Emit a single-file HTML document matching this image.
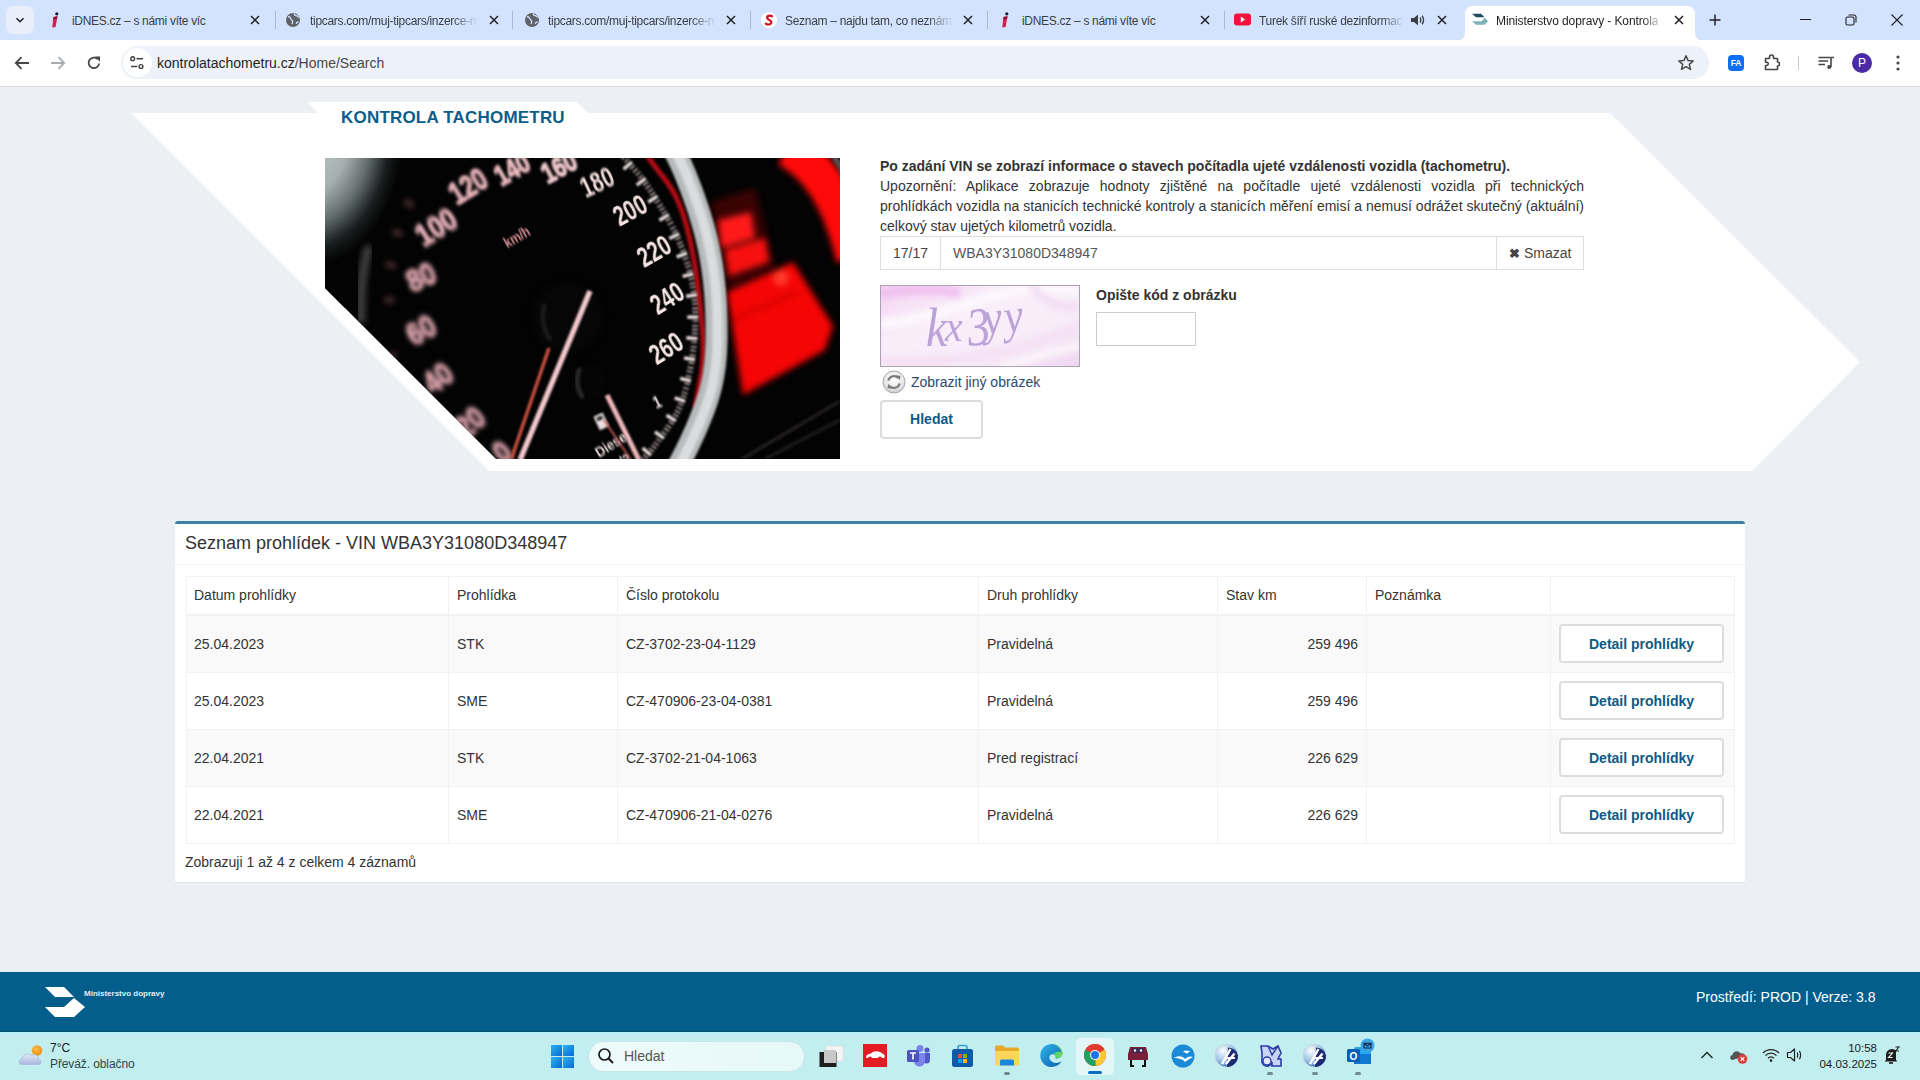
<!DOCTYPE html>
<html><head><meta charset="utf-8">
<style>
*{box-sizing:border-box;margin:0;padding:0}
html,body{width:1920px;height:1080px;overflow:hidden;font-family:"Liberation Sans",sans-serif;background:#eceff4;position:relative}
.abs{position:absolute}
#tabs{left:0;top:0;width:1920px;height:40px;background:#d3e3fd}
#toolbar{left:0;top:40px;width:1920px;height:46px;background:#fff}
#tbline{left:0;top:86px;width:1920px;height:1px;background:#d6d9de}
#page{left:0;top:87px;width:1920px;height:885px;background:#eceff4}
#footer{left:0;top:972px;width:1920px;height:60px;background:#045e8c}
#taskbar{left:0;top:1032px;width:1920px;height:48px;background:#c3eef0}
.tab{position:absolute;top:0;height:40px;font-size:12.5px;color:#1f1f1f}
.tabt{position:absolute;top:14px;white-space:nowrap;overflow:hidden}
.tabx{position:absolute;top:12px;width:16px;height:16px}
.sep{position:absolute;top:12px;width:1px;height:18px;background:#a8b4c8}
</style></head><body>
<div id="tabs" class="abs"></div>
<div id="toolbar" class="abs"></div>
<div id="tbline" class="abs"></div>
<!-- TAB STRIP -->
<div class="abs" style="left:6px;top:6px;width:28px;height:28px;border-radius:8px;background:#e8effb"></div>
<svg class="abs" style="left:14px;top:14px" width="12" height="12" viewBox="0 0 12 12"><path d="M2.5 4.2L6 7.7 9.5 4.2" stroke="#202124" stroke-width="1.6" fill="none"/></svg>
<svg class="abs" style="left:47px;top:12px" width="16" height="16" viewBox="0 0 16 16"><circle cx="9.8" cy="1.8" r="1.6" fill="#1a1a2e"/><path d="M6.5 5L10.5 4.2 8.6 15 5.2 15.6z" fill="#d6204b"/><path d="M6.5 5L10.5 4.2 10 7 6.2 7.6z" fill="#8a1030"/></svg>
<div class="abs tabt" style="left:72px;width:140px;font-size:12px;letter-spacing:-0.3px;color:#3a3e44">iDNES.cz – s námi víte víc</div>
<svg class="abs" style="left:249px;top:14px" width="12" height="12" viewBox="0 0 12 12"><path d="M2 2L10 10M10 2L2 10" stroke="#202124" stroke-width="1.5"/></svg>
<svg class="abs" style="left:285px;top:12px" width="16" height="16" viewBox="0 0 16 16"><circle cx="8" cy="8" r="7" fill="#5f6368"/><path d="M3 4.5c1.5 0 2.5 1 2.8 2.2.3 1.2 1.5 1.3 1.8 2.3.3 1-.5 2-.3 3.2M9.5 1.5c-.3 1.2.5 2 1.6 2.2 1.2.2 2.2.8 2.5 2M13.5 10c-1 0-2 .6-2.3 1.8" stroke="#d3e3fd" stroke-width="1.3" fill="none"/></svg>
<div class="abs tabt" style="left:310px;width:168px;font-size:12px;letter-spacing:-0.3px;color:#3a3e44;-webkit-mask-image:linear-gradient(90deg,#000 85%,transparent)">tipcars.com/muj-tipcars/inzerce-moje-inzeraty</div>
<svg class="abs" style="left:488px;top:14px" width="12" height="12" viewBox="0 0 12 12"><path d="M2 2L10 10M10 2L2 10" stroke="#202124" stroke-width="1.5"/></svg>
<svg class="abs" style="left:524px;top:12px" width="16" height="16" viewBox="0 0 16 16"><circle cx="8" cy="8" r="7" fill="#5f6368"/><path d="M3 4.5c1.5 0 2.5 1 2.8 2.2.3 1.2 1.5 1.3 1.8 2.3.3 1-.5 2-.3 3.2M9.5 1.5c-.3 1.2.5 2 1.6 2.2 1.2.2 2.2.8 2.5 2M13.5 10c-1 0-2 .6-2.3 1.8" stroke="#d3e3fd" stroke-width="1.3" fill="none"/></svg>
<div class="abs tabt" style="left:548px;width:168px;font-size:12px;letter-spacing:-0.3px;color:#3a3e44;-webkit-mask-image:linear-gradient(90deg,#000 85%,transparent)">tipcars.com/muj-tipcars/inzerce-moje-inzeraty</div>
<svg class="abs" style="left:725px;top:14px" width="12" height="12" viewBox="0 0 12 12"><path d="M2 2L10 10M10 2L2 10" stroke="#202124" stroke-width="1.5"/></svg>
<svg class="abs" style="left:761px;top:12px" width="16" height="16" viewBox="0 0 16 16"><circle cx="8" cy="8" r="8" fill="#fff"/><path d="M11 4.2C9 3 5.5 3.8 6.2 6.2 7 8.5 11 8 10.2 10.8 9.5 13 6 12.8 4.8 11.6" stroke="#d0111b" stroke-width="2.2" fill="none" stroke-linecap="round"/></svg>
<div class="abs tabt" style="left:785px;width:168px;font-size:12px;letter-spacing:-0.3px;color:#3a3e44;-webkit-mask-image:linear-gradient(90deg,#000 85%,transparent)">Seznam – najdu tam, co neznám</div>
<svg class="abs" style="left:962px;top:14px" width="12" height="12" viewBox="0 0 12 12"><path d="M2 2L10 10M10 2L2 10" stroke="#202124" stroke-width="1.5"/></svg>
<svg class="abs" style="left:997px;top:12px" width="16" height="16" viewBox="0 0 16 16"><circle cx="9.8" cy="1.8" r="1.6" fill="#1a1a2e"/><path d="M6.5 5L10.5 4.2 8.6 15 5.2 15.6z" fill="#d6204b"/><path d="M6.5 5L10.5 4.2 10 7 6.2 7.6z" fill="#8a1030"/></svg>
<div class="abs tabt" style="left:1022px;width:140px;font-size:12px;letter-spacing:-0.3px;color:#3a3e44">iDNES.cz – s námi víte víc</div>
<svg class="abs" style="left:1199px;top:14px" width="12" height="12" viewBox="0 0 12 12"><path d="M2 2L10 10M10 2L2 10" stroke="#202124" stroke-width="1.5"/></svg>
<svg class="abs" style="left:1234px;top:13px" width="17" height="13" viewBox="0 0 17 13"><rect x="0" y="0.5" width="17" height="12" rx="3" fill="#f0143c"/><path d="M6.8 3.6L11 6.5 6.8 9.4z" fill="#fff"/></svg>
<div class="abs tabt" style="left:1259px;width:145px;font-size:12px;letter-spacing:-0.3px;color:#3a3e44;-webkit-mask-image:linear-gradient(90deg,#000 85%,transparent)">Turek šíří ruské dezinformace</div>
<svg class="abs" style="left:1410px;top:13px" width="15" height="14" viewBox="0 0 15 14"><path d="M1 5h3l4-3.5v11L4 9H1z" fill="#3c4043"/><path d="M10 4.5c1 .8 1 4.2 0 5M12 2.8c2 1.8 2 6.6 0 8.4" stroke="#3c4043" stroke-width="1.4" fill="none"/></svg>
<svg class="abs" style="left:1436px;top:14px" width="12" height="12" viewBox="0 0 12 12"><path d="M2 2L10 10M10 2L2 10" stroke="#202124" stroke-width="1.5"/></svg>
<div class="abs" style="left:275px;top:11px;width:1px;height:18px;background:#a9b9d3"></div>
<div class="abs" style="left:512px;top:11px;width:1px;height:18px;background:#a9b9d3"></div>
<div class="abs" style="left:750px;top:11px;width:1px;height:18px;background:#a9b9d3"></div>
<div class="abs" style="left:987px;top:11px;width:1px;height:18px;background:#a9b9d3"></div>
<div class="abs" style="left:1224px;top:11px;width:1px;height:18px;background:#a9b9d3"></div>

<svg class="abs" style="left:1455px;top:0" width="252" height="41" viewBox="0 0 252 41"><path d="M0 41 Q10 41 10 32 L10 14 Q10 6 18 6 L232 6 Q240 6 240 14 L240 32 Q240 41 250 41 Z" fill="#fff"/></svg>
<svg class="abs" style="left:1472px;top:13px" width="17" height="13" viewBox="0 0 17 13"><path d="M0 0.8H9L12.5 4.2H4Z" fill="#1f4c62"/><path d="M0 8.2H9.5L12.5 5H13L16 8.2 12.8 11.7H4Z" fill="#7fb4bb"/></svg>
<div class="abs tabt" style="left:1496px;width:167px;font-size:12px;letter-spacing:-0.1px;color:#1f1f1f;-webkit-mask-image:linear-gradient(90deg,#000 88%,transparent)">Ministerstvo dopravy - Kontrola tachometru</div>
<svg class="abs" style="left:1673px;top:14px" width="12" height="12" viewBox="0 0 12 12"><path d="M2 2L10 10M10 2L2 10" stroke="#202124" stroke-width="1.5"/></svg>
<svg class="abs" style="left:1708px;top:13px" width="14" height="14" viewBox="0 0 14 14"><path d="M7 1.5V12.5M1.5 7H12.5" stroke="#202124" stroke-width="1.5"/></svg>
<div class="abs" style="left:1800px;top:19px;width:11px;height:1px;background:#202124"></div>
<svg class="abs" style="left:1845px;top:14px" width="12" height="12" viewBox="0 0 12 12"><rect x="1" y="3" width="8" height="8" rx="1.5" fill="none" stroke="#202124" stroke-width="1.1"/><path d="M3.5 1h5.5a2 2 0 0 1 2 2v5.5" fill="none" stroke="#202124" stroke-width="1.1"/></svg>
<svg class="abs" style="left:1890px;top:13px" width="14" height="14" viewBox="0 0 14 14"><path d="M1.5 1.5L12.5 12.5M12.5 1.5L1.5 12.5" stroke="#202124" stroke-width="1.2"/></svg>

<!-- TOOLBAR -->
<svg class="abs" style="left:13px;top:54px" width="18" height="18" viewBox="0 0 18 18"><path d="M16 9H3M8.5 3.2L2.8 9 8.5 14.8" stroke="#474747" stroke-width="1.8" fill="none"/></svg>
<svg class="abs" style="left:49px;top:54px" width="18" height="18" viewBox="0 0 18 18"><path d="M2 9H15M9.5 3.2L15.2 9 9.5 14.8" stroke="#a8abae" stroke-width="1.8" fill="none"/></svg>
<svg class="abs" style="left:85px;top:54px" width="18" height="18" viewBox="0 0 18 18"><path d="M14.2 9.5A5.3 5.3 0 1 1 12.6 5" stroke="#474747" stroke-width="1.8" fill="none"/><path d="M9.8 2.5H15V7.7z" fill="#474747"/></svg>
<div class="abs" style="left:121px;top:46px;width:1588px;height:33px;border-radius:17px;background:#edf2fa"></div>
<div class="abs" style="left:123px;top:48px;width:29px;height:29px;border-radius:50%;background:#fff"></div>
<svg class="abs" style="left:129px;top:55px" width="16" height="16" viewBox="0 0 16 16"><circle cx="3.7" cy="3.7" r="1.9" fill="none" stroke="#3c4043" stroke-width="1.4"/><path d="M7.5 3.7H14" stroke="#3c4043" stroke-width="1.5"/><circle cx="12" cy="11.5" r="1.9" fill="none" stroke="#3c4043" stroke-width="1.4"/><path d="M2 11.5H8.3" stroke="#3c4043" stroke-width="1.5"/></svg>
<div class="abs" style="left:157px;top:55px;font-size:14px;color:#1f1f1f;white-space:nowrap">kontrolatachometru.cz<span style="color:#474747">/Home/Search</span></div>
<svg class="abs" style="left:1677px;top:54px" width="18" height="18" viewBox="0 0 18 18"><path d="M9 1.8L11.1 6.6 16.2 7 12.3 10.4 13.5 15.4 9 12.7 4.5 15.4 5.7 10.4 1.8 7 6.9 6.6Z" fill="none" stroke="#474747" stroke-width="1.5" stroke-linejoin="round"/></svg>
<div class="abs" style="left:1728px;top:55px;width:16px;height:16px;border-radius:4px;background:#0b6ef3;color:#fff;font-size:8.5px;font-weight:bold;line-height:16px;text-align:center;letter-spacing:-0.3px">FA</div>
<svg class="abs" style="left:1763px;top:53px" width="20" height="19" viewBox="0 0 20 19"><path d="M2.5 5.5H6.5V4A2 2 0 0 1 10.5 4V5.5H14.5V9A2 2 0 0 1 14.5 13V16.5H2.5V12.5H4A1.7 1.7 0 0 0 4 9.2H2.5Z" fill="none" stroke="#474747" stroke-width="1.6" stroke-linejoin="round"/></svg>
<div class="abs" style="left:1798px;top:56px;width:1px;height:14px;background:#c7cbd1"></div>
<svg class="abs" style="left:1818px;top:56px" width="18" height="14" viewBox="0 0 18 14"><path d="M0.5 1.5H12M0.5 5H10M0.5 8.5H7" stroke="#474747" stroke-width="1.6"/><path d="M13 11V1.5H16" stroke="#474747" stroke-width="1.6" fill="none"/><circle cx="11.2" cy="11" r="2" fill="#474747"/></svg>
<div class="abs" style="left:1852px;top:53px;width:20px;height:20px;border-radius:50%;background:#4b2aa6;color:#fff;font-size:12px;line-height:20px;text-align:center">P</div>
<svg class="abs" style="left:1895px;top:54px" width="6" height="18" viewBox="0 0 6 18"><circle cx="3" cy="3" r="1.6" fill="#474747"/><circle cx="3" cy="9" r="1.6" fill="#474747"/><circle cx="3" cy="15" r="1.6" fill="#474747"/></svg>

<div id="page" class="abs"></div>

<!-- PAGE -->
<svg class="abs" style="left:0;top:87px" width="1920" height="885" viewBox="0 87 1920 885">
<polygon points="131,113 1610,113 1860,362 1752,471 489,471" fill="#fff"/>
<polygon points="307,102 577,102 588,113 318,113" fill="#fff"/>
</svg>
<div class="abs" style="left:341px;top:108px;font-size:17px;font-weight:bold;color:#0b5d8c;white-space:nowrap;letter-spacing:0.2px">KONTROLA TACHOMETRU</div>
<svg class="abs" style="left:325px;top:158px" width="515" height="301" viewBox="0 0 515 301">
<defs>
<clipPath id="spc"><polygon points="0,0 515,0 515,301 171,301 0,130"/></clipPath>
<radialGradient id="tlg" cx="0" cy="0" r="1" gradientUnits="userSpaceOnUse" gradientTransform="translate(-22 -22) scale(100 132)"><stop offset="0" stop-color="#c4cccc"/><stop offset="0.45" stop-color="#a6b0b0"/><stop offset="0.66" stop-color="#687272"/><stop offset="0.86" stop-color="#1a1e1e"/><stop offset="1" stop-color="#030303"/></radialGradient>
<filter id="bl1" x="-20%" y="-20%" width="140%" height="140%" color-interpolation-filters="sRGB"><feGaussianBlur stdDeviation="0.8"/></filter>
<filter id="bl2" x="-20%" y="-20%" width="140%" height="140%" color-interpolation-filters="sRGB"><feGaussianBlur stdDeviation="1.8"/></filter>
<filter id="bl3" x="-30%" y="-30%" width="160%" height="160%" color-interpolation-filters="sRGB"><feGaussianBlur stdDeviation="3"/></filter>
<filter id="nb7" x="-30%" y="-30%" width="160%" height="160%" color-interpolation-filters="sRGB"><feGaussianBlur stdDeviation="0.7"/></filter><filter id="nb8" x="-30%" y="-30%" width="160%" height="160%" color-interpolation-filters="sRGB"><feGaussianBlur stdDeviation="0.8"/></filter><filter id="nb13" x="-30%" y="-30%" width="160%" height="160%" color-interpolation-filters="sRGB"><feGaussianBlur stdDeviation="1.3"/></filter><filter id="nb15" x="-30%" y="-30%" width="160%" height="160%" color-interpolation-filters="sRGB"><feGaussianBlur stdDeviation="1.5"/></filter><filter id="nb18" x="-30%" y="-30%" width="160%" height="160%" color-interpolation-filters="sRGB"><feGaussianBlur stdDeviation="1.8"/></filter><filter id="nb21" x="-30%" y="-30%" width="160%" height="160%" color-interpolation-filters="sRGB"><feGaussianBlur stdDeviation="2.1"/></filter><filter id="nb23" x="-30%" y="-30%" width="160%" height="160%" color-interpolation-filters="sRGB"><feGaussianBlur stdDeviation="2.3"/></filter><filter id="nb25" x="-30%" y="-30%" width="160%" height="160%" color-interpolation-filters="sRGB"><feGaussianBlur stdDeviation="2.5"/></filter><filter id="nb26" x="-30%" y="-30%" width="160%" height="160%" color-interpolation-filters="sRGB"><feGaussianBlur stdDeviation="2.6"/></filter>
</defs>
<g clip-path="url(#spc)">
<rect width="515" height="301" fill="#030303"/>
<rect width="140" height="150" fill="url(#tlg)"/>
<path d="M44 88 Q34 120 36 165" stroke="#404040" stroke-width="9" fill="none" filter="url(#bl3)"/>
<!-- red arc top-right -->
<path d="M462 -10 Q510 15 530 100" stroke="#ff0a0a" stroke-width="38" fill="none" filter="url(#bl3)"/>
<path d="M503 -10 Q525 18 532 55" stroke="#5a5050" stroke-width="6" fill="none" filter="url(#bl2)"/>
<!-- small lcd panel -->
<polygon points="386,44 430,30 450,110 404,132" fill="#3a0303" filter="url(#bl3)"/>
<g filter="url(#bl3)">
<polygon points="393,62 426,54 430,80 396,90" fill="#ff1a1a"/>
<polygon points="400,92 440,80 444,104 404,118" fill="#f81010"/>
</g>
<!-- big lcd panel -->
<g filter="url(#bl3)">
<polygon points="402,134 468,104 508,168 500,192 418,237" fill="#f50505"/>
<circle cx="456" cy="120" r="8" fill="#ff3a2a"/>
<path d="M408 162 L472 134" stroke="#c80000" stroke-width="3"/>
</g>
<path d="M417 301 L515 243" stroke="#3a3232" stroke-width="2" fill="none" filter="url(#bl2)"/>
<path d="M440 301 L515 262" stroke="#202020" stroke-width="3" fill="none" filter="url(#bl2)"/>
<!-- rim -->
<path d="M300.0 -40.0 L301.2 -38.1 L302.6 -35.6 L304.3 -32.7 L306.1 -29.5 L308.2 -26.0 L310.4 -22.3 L312.6 -18.5 L315.0 -14.6 L317.3 -10.7 L319.6 -7.0 L321.9 -3.4 L324.0 0.0 L326.1 3.2 L328.3 6.2 L330.6 9.3 L332.9 12.3 L335.2 15.2 L337.6 18.2 L339.8 21.2 L342.1 24.2 L344.2 27.3 L346.3 30.4 L348.2 33.6 L350.0 37.0 L351.7 40.4 L353.2 43.8 L354.6 47.2 L356.0 50.7 L357.3 54.2 L358.5 57.8 L359.7 61.5 L360.8 65.3 L361.9 69.2 L362.9 73.3 L364.0 77.6 L365.0 82.0 L366.0 86.7 L367.0 91.7 L368.0 96.9 L369.0 102.3 L369.9 107.8 L370.8 113.4 L371.6 119.1 L372.4 124.7 L373.1 130.3 L373.8 135.7 L374.4 141.0 L375.0 146.0 L375.5 150.9 L376.0 155.6 L376.5 160.3 L376.9 164.9 L377.3 169.4 L377.6 173.9 L377.9 178.3 L378.1 182.7 L378.2 187.0 L378.2 191.3 L378.2 195.7 L378.0 200.0 L377.7 204.5 L377.2 209.1 L376.6 214.0 L375.9 218.8 L375.0 223.6 L374.2 228.4 L373.3 232.9 L372.5 237.2 L371.7 241.1 L371.0 244.6 L370.4 247.6 L370.0 250.0" fill="none" stroke="#b80c14" stroke-width="5" filter="url(#bl2)"/>
<path d="M318.0 -50.0 L319.7 -47.7 L321.9 -44.9 L324.4 -41.7 L327.3 -38.2 L330.4 -34.3 L333.7 -30.1 L337.1 -25.6 L340.5 -20.8 L343.9 -15.9 L347.1 -10.7 L350.2 -5.4 L353.0 0.0 L355.7 5.7 L358.4 11.8 L361.1 18.2 L363.7 24.9 L366.4 31.8 L368.9 38.8 L371.4 46.0 L373.8 53.1 L376.0 60.3 L378.1 67.4 L380.0 74.3 L381.7 81.0 L383.2 87.6 L384.6 94.1 L385.8 100.7 L386.9 107.2 L387.8 113.7 L388.6 120.1 L389.3 126.5 L389.9 132.9 L390.4 139.3 L390.8 145.6 L391.1 151.8 L391.3 158.0 L391.5 164.1 L391.5 170.2 L391.6 176.2 L391.5 182.1 L391.3 188.0 L391.0 193.9 L390.6 199.7 L390.1 205.6 L389.3 211.4 L388.4 217.2 L387.3 223.1 L386.0 229.0 L384.4 235.0 L382.6 241.1 L380.5 247.4 L378.2 253.6 L375.7 259.9 L373.2 266.1 L370.5 272.3 L367.8 278.3 L365.1 284.1 L362.4 289.7 L359.8 295.0 L357.3 300.0 L354.8 304.8 L352.1 309.5 L349.3 314.1 L346.5 318.6 L343.7 322.9 L340.9 326.9 L338.2 330.8 L335.6 334.3 L333.3 337.5 L331.2 340.4 L329.4 342.9 L328.0 345.0" fill="none" stroke="#b6baba" stroke-width="22" filter="url(#bl1)"/>
<path d="M319.0 -50.0 L320.7 -47.7 L322.9 -44.9 L325.4 -41.7 L328.3 -38.2 L331.4 -34.3 L334.7 -30.1 L338.1 -25.6 L341.5 -20.8 L344.9 -15.9 L348.1 -10.7 L351.2 -5.4 L354.0 0.0 L356.7 5.7 L359.4 11.8 L362.1 18.2 L364.7 24.9 L367.4 31.8 L369.9 38.8 L372.4 46.0 L374.8 53.1 L377.0 60.3 L379.1 67.4 L381.0 74.3 L382.7 81.0 L384.2 87.6 L385.6 94.1 L386.8 100.7 L387.9 107.2 L388.8 113.7 L389.6 120.1 L390.3 126.5 L390.9 132.9 L391.4 139.3 L391.8 145.6 L392.1 151.8 L392.3 158.0 L392.5 164.1 L392.5 170.2 L392.6 176.2 L392.5 182.1 L392.3 188.0 L392.0 193.9 L391.6 199.7 L391.1 205.6 L390.3 211.4 L389.4 217.2 L388.3 223.1 L387.0 229.0 L385.4 235.0 L383.6 241.1 L381.5 247.4 L379.2 253.6 L376.7 259.9 L374.2 266.1 L371.5 272.3 L368.8 278.3 L366.1 284.1 L363.4 289.7 L360.8 295.0 L358.3 300.0 L355.8 304.8 L353.1 309.5 L350.3 314.1 L347.5 318.6 L344.7 322.9 L341.9 326.9 L339.2 330.8 L336.6 334.3 L334.3 337.5 L332.2 340.4 L330.4 342.9 L329.0 345.0" fill="none" stroke="#dadddd" stroke-width="10" filter="url(#bl2)"/>
<!-- ticks -->
<g filter="url(#bl1)"><line x1="295.2" y1="-8.7" x2="290.9" y2="-4.5" stroke="#d8c6c6" stroke-width="1.4"/><line x1="298.2" y1="-5.7" x2="293.9" y2="-1.5" stroke="#d8c6c6" stroke-width="1.4"/><line x1="301.0" y1="-2.7" x2="296.6" y2="1.4" stroke="#d8c6c6" stroke-width="1.4"/><line x1="304.0" y1="0.5" x2="299.5" y2="4.5" stroke="#d8c6c6" stroke-width="1.4"/><line x1="307.0" y1="4.0" x2="298.6" y2="11.1" stroke="#f2e4e4" stroke-width="3.4"/><line x1="309.7" y1="7.2" x2="305.2" y2="11.1" stroke="#d8c6c6" stroke-width="1.4"/><line x1="312.6" y1="10.5" x2="308.1" y2="14.4" stroke="#d8c6c6" stroke-width="1.4"/><line x1="315.3" y1="13.7" x2="310.7" y2="17.5" stroke="#d8c6c6" stroke-width="1.4"/><line x1="318.0" y1="17.0" x2="313.3" y2="20.8" stroke="#d8c6c6" stroke-width="1.4"/><line x1="320.6" y1="20.3" x2="311.8" y2="27.0" stroke="#f2e4e4" stroke-width="3.4"/><line x1="323.2" y1="23.9" x2="318.3" y2="27.4" stroke="#d8c6c6" stroke-width="1.4"/><line x1="325.5" y1="27.3" x2="320.6" y2="30.7" stroke="#d8c6c6" stroke-width="1.4"/><line x1="328.0" y1="31.0" x2="323.0" y2="34.2" stroke="#d8c6c6" stroke-width="1.4"/><line x1="330.2" y1="34.4" x2="325.1" y2="37.6" stroke="#d8c6c6" stroke-width="1.4"/><line x1="332.5" y1="38.1" x2="323.3" y2="44.0" stroke="#f2e4e4" stroke-width="3.4"/><line x1="335.0" y1="42.0" x2="329.9" y2="45.2" stroke="#d8c6c6" stroke-width="1.4"/><line x1="337.6" y1="46.1" x2="332.5" y2="49.3" stroke="#d8c6c6" stroke-width="1.4"/><line x1="339.7" y1="49.5" x2="334.6" y2="52.7" stroke="#d8c6c6" stroke-width="1.4"/><line x1="341.8" y1="53.0" x2="336.7" y2="56.1" stroke="#d8c6c6" stroke-width="1.4"/><line x1="343.9" y1="56.6" x2="334.4" y2="62.2" stroke="#f2e4e4" stroke-width="3.4"/><line x1="346.0" y1="60.2" x2="340.8" y2="63.2" stroke="#d8c6c6" stroke-width="1.4"/><line x1="348.1" y1="63.9" x2="342.8" y2="66.8" stroke="#d8c6c6" stroke-width="1.4"/><line x1="350.5" y1="68.5" x2="345.2" y2="71.3" stroke="#d8c6c6" stroke-width="1.4"/><line x1="352.4" y1="72.1" x2="347.1" y2="74.8" stroke="#d8c6c6" stroke-width="1.4"/><line x1="354.2" y1="75.8" x2="344.3" y2="80.5" stroke="#f2e4e4" stroke-width="3.4"/><line x1="355.9" y1="79.4" x2="350.4" y2="81.8" stroke="#d8c6c6" stroke-width="1.4"/><line x1="357.7" y1="83.8" x2="352.2" y2="86.0" stroke="#d8c6c6" stroke-width="1.4"/><line x1="359.1" y1="87.3" x2="353.6" y2="89.5" stroke="#d8c6c6" stroke-width="1.4"/><line x1="360.8" y1="91.7" x2="355.2" y2="93.8" stroke="#d8c6c6" stroke-width="1.4"/><line x1="362.1" y1="95.2" x2="351.7" y2="98.9" stroke="#f2e4e4" stroke-width="3.4"/><line x1="363.6" y1="99.6" x2="357.9" y2="101.5" stroke="#d8c6c6" stroke-width="1.4"/><line x1="365.1" y1="104.1" x2="359.3" y2="105.9" stroke="#d8c6c6" stroke-width="1.4"/><line x1="366.1" y1="107.7" x2="360.4" y2="109.3" stroke="#d8c6c6" stroke-width="1.4"/><line x1="367.4" y1="112.2" x2="361.6" y2="113.7" stroke="#d8c6c6" stroke-width="1.4"/><line x1="368.3" y1="115.8" x2="357.6" y2="118.4" stroke="#f2e4e4" stroke-width="3.4"/><line x1="369.3" y1="120.3" x2="363.5" y2="121.6" stroke="#d8c6c6" stroke-width="1.4"/><line x1="370.2" y1="124.9" x2="364.4" y2="126.0" stroke="#d8c6c6" stroke-width="1.4"/><line x1="370.9" y1="128.6" x2="365.0" y2="129.6" stroke="#d8c6c6" stroke-width="1.4"/><line x1="371.6" y1="133.2" x2="365.7" y2="134.1" stroke="#d8c6c6" stroke-width="1.4"/><line x1="372.1" y1="136.9" x2="361.2" y2="138.3" stroke="#f2e4e4" stroke-width="3.4"/><line x1="372.6" y1="141.7" x2="366.6" y2="142.2" stroke="#d8c6c6" stroke-width="1.4"/><line x1="372.9" y1="145.5" x2="366.9" y2="145.9" stroke="#d8c6c6" stroke-width="1.4"/><line x1="373.2" y1="150.3" x2="367.2" y2="150.5" stroke="#d8c6c6" stroke-width="1.4"/><line x1="373.3" y1="154.2" x2="367.3" y2="154.3" stroke="#d8c6c6" stroke-width="1.4"/><line x1="373.3" y1="159.1" x2="362.3" y2="159.1" stroke="#f2e4e4" stroke-width="3.4"/><line x1="373.3" y1="163.0" x2="367.3" y2="162.9" stroke="#d8c6c6" stroke-width="1.4"/><line x1="373.2" y1="167.9" x2="367.2" y2="167.7" stroke="#d8c6c6" stroke-width="1.4"/><line x1="373.0" y1="171.8" x2="367.0" y2="171.5" stroke="#d8c6c6" stroke-width="1.4"/><line x1="372.8" y1="175.7" x2="366.8" y2="175.3" stroke="#d8c6c6" stroke-width="1.4"/><line x1="372.4" y1="180.6" x2="361.4" y2="179.7" stroke="#f2e4e4" stroke-width="3.4"/><line x1="372.0" y1="184.5" x2="366.1" y2="183.9" stroke="#d8c6c6" stroke-width="1.4"/><line x1="371.6" y1="189.3" x2="365.6" y2="188.6" stroke="#d8c6c6" stroke-width="1.4"/><line x1="371.1" y1="193.1" x2="365.2" y2="192.3" stroke="#d8c6c6" stroke-width="1.4"/><line x1="370.5" y1="197.8" x2="364.6" y2="197.0" stroke="#d8c6c6" stroke-width="1.4"/><line x1="370.0" y1="201.6" x2="359.1" y2="200.0" stroke="#f2e4e4" stroke-width="3.4"/><line x1="369.3" y1="205.5" x2="363.4" y2="204.5" stroke="#d8c6c6" stroke-width="1.4"/><line x1="368.5" y1="210.3" x2="362.6" y2="209.2" stroke="#d8c6c6" stroke-width="1.4"/><line x1="367.8" y1="214.1" x2="361.9" y2="213.0" stroke="#d8c6c6" stroke-width="1.4"/><line x1="366.8" y1="218.9" x2="360.9" y2="217.7" stroke="#d8c6c6" stroke-width="1.4"/><line x1="365.9" y1="222.8" x2="355.2" y2="220.3" stroke="#f2e4e4" stroke-width="3.4"/><line x1="365.0" y1="226.5" x2="359.2" y2="225.1" stroke="#d8c6c6" stroke-width="1.4"/><line x1="363.8" y1="231.1" x2="358.0" y2="229.6" stroke="#d8c6c6" stroke-width="1.4"/><line x1="362.6" y1="235.6" x2="356.8" y2="233.9" stroke="#d8c6c6" stroke-width="1.4"/><line x1="361.5" y1="239.1" x2="355.8" y2="237.3" stroke="#d8c6c6" stroke-width="1.4"/><line x1="360.1" y1="243.4" x2="349.7" y2="239.8" stroke="#f2e4e4" stroke-width="3.4"/><line x1="358.6" y1="247.4" x2="353.0" y2="245.3" stroke="#d8c6c6" stroke-width="1.4"/><line x1="357.0" y1="251.3" x2="351.5" y2="248.9" stroke="#d8c6c6" stroke-width="1.4"/><line x1="355.3" y1="255.1" x2="349.9" y2="252.4" stroke="#d8c6c6" stroke-width="1.4"/><line x1="353.4" y1="258.7" x2="348.1" y2="255.8" stroke="#d8c6c6" stroke-width="1.4"/><line x1="350.9" y1="262.9" x2="341.5" y2="257.3" stroke="#f2e4e4" stroke-width="3.4"/><line x1="348.8" y1="266.3" x2="343.8" y2="263.1" stroke="#d8c6c6" stroke-width="1.4"/><line x1="346.2" y1="270.2" x2="341.2" y2="266.9" stroke="#d8c6c6" stroke-width="1.4"/><line x1="344.0" y1="273.4" x2="339.1" y2="269.9" stroke="#d8c6c6" stroke-width="1.4"/><line x1="341.4" y1="277.0" x2="336.6" y2="273.4" stroke="#d8c6c6" stroke-width="1.4"/><line x1="338.9" y1="280.3" x2="330.0" y2="273.8" stroke="#f2e4e4" stroke-width="3.4"/><line x1="336.1" y1="284.0" x2="331.3" y2="280.5" stroke="#d8c6c6" stroke-width="1.4"/><line x1="333.7" y1="287.5" x2="328.8" y2="284.0" stroke="#d8c6c6" stroke-width="1.4"/><line x1="331.3" y1="290.6" x2="326.6" y2="287.0" stroke="#d8c6c6" stroke-width="1.4"/><line x1="328.7" y1="293.9" x2="324.1" y2="290.1" stroke="#d8c6c6" stroke-width="1.4"/><line x1="326.0" y1="297.2" x2="317.6" y2="290.0" stroke="#f2e4e4" stroke-width="3.4"/><line x1="322.9" y1="300.7" x2="318.4" y2="296.6" stroke="#d8c6c6" stroke-width="1.4"/><line x1="320.0" y1="303.7" x2="315.6" y2="299.6" stroke="#d8c6c6" stroke-width="1.4"/></g>
<!-- numbers --><g filter="url(#bl3)" stroke="#8a5058" stroke-width="3.5"><line x1="80" y1="43" x2="88" y2="48"/><line x1="68" y1="73" x2="77" y2="77"/><line x1="61" y1="106" x2="70" y2="108"/><line x1="60" y1="142" x2="69" y2="142"/><line x1="62" y1="198" x2="71" y2="197"/><line x1="70" y1="248" x2="79" y2="245"/></g>
<text x="0" y="0" transform="translate(234 9) rotate(-28) scale(0.72 1)" font-family="Liberation Sans" font-weight="bold" font-size="30" fill="#f0c8cc" stroke="#f0c8cc" stroke-width="1.6" text-anchor="middle" dominant-baseline="central" filter="url(#nb13)">160</text><text x="0" y="0" transform="translate(187 11) rotate(-30) scale(0.72 1)" font-family="Liberation Sans" font-weight="bold" font-size="30" fill="#ecbcc2" stroke="#ecbcc2" stroke-width="1.6" text-anchor="middle" dominant-baseline="central" filter="url(#nb15)">140</text><text x="0" y="0" transform="translate(143 28) rotate(-32) scale(0.75 1)" font-family="Liberation Sans" font-weight="bold" font-size="31" fill="#e8b4ba" stroke="#e8b4ba" stroke-width="1.6" text-anchor="middle" dominant-baseline="central" filter="url(#nb18)">120</text><text x="0" y="0" transform="translate(111 69) rotate(-32) scale(0.8 1)" font-family="Liberation Sans" font-weight="bold" font-size="32" fill="#e6b0b8" stroke="#e6b0b8" stroke-width="1.6" text-anchor="middle" dominant-baseline="central" filter="url(#nb21)">100</text><text x="0" y="0" transform="translate(96 119) rotate(-25) scale(0.82 1)" font-family="Liberation Sans" font-weight="bold" font-size="32" fill="#e2a8b2" stroke="#e2a8b2" stroke-width="1.6" text-anchor="middle" dominant-baseline="central" filter="url(#nb23)">80</text><text x="0" y="0" transform="translate(96 172) rotate(-30) scale(0.82 1)" font-family="Liberation Sans" font-weight="bold" font-size="32" fill="#e2a8b2" stroke="#e2a8b2" stroke-width="1.6" text-anchor="middle" dominant-baseline="central" filter="url(#nb25)">60</text><text x="0" y="0" transform="translate(113 220) rotate(-38) scale(0.8 1)" font-family="Liberation Sans" font-weight="bold" font-size="32" fill="#e2a8b2" stroke="#e2a8b2" stroke-width="1.6" text-anchor="middle" dominant-baseline="central" filter="url(#nb26)">40</text><text x="0" y="0" transform="translate(145 264) rotate(-40) scale(0.8 1)" font-family="Liberation Sans" font-weight="bold" font-size="32" fill="#e2a8b2" stroke="#e2a8b2" stroke-width="1.6" text-anchor="middle" dominant-baseline="central" filter="url(#nb26)">20</text><text x="0" y="0" transform="translate(177 294) rotate(-40) scale(0.8 1)" font-family="Liberation Sans" font-weight="bold" font-size="32" fill="#e2a8b2" stroke="#e2a8b2" stroke-width="1.6" text-anchor="middle" dominant-baseline="central" filter="url(#nb26)">0</text><text x="0" y="0" transform="translate(272 24) rotate(-25) scale(0.7 1)" font-family="Liberation Sans" font-weight="bold" font-size="29" fill="#f2dcdc" text-anchor="middle" dominant-baseline="central" filter="url(#nb8)">180</text><text x="0" y="0" transform="translate(305 52) rotate(-28) scale(0.7 1)" font-family="Liberation Sans" font-weight="bold" font-size="29" fill="#f4e0e0" text-anchor="middle" dominant-baseline="central" filter="url(#nb7)">200</text><text x="0" y="0" transform="translate(329 93) rotate(-30) scale(0.7 1)" font-family="Liberation Sans" font-weight="bold" font-size="29" fill="#f6e6e6" text-anchor="middle" dominant-baseline="central" filter="url(#nb7)">220</text><text x="0" y="0" transform="translate(342 140) rotate(-32) scale(0.7 1)" font-family="Liberation Sans" font-weight="bold" font-size="29" fill="#f6e6e6" text-anchor="middle" dominant-baseline="central" filter="url(#nb7)">240</text><text x="0" y="0" transform="translate(341 190) rotate(-32) scale(0.7 1)" font-family="Liberation Sans" font-weight="bold" font-size="29" fill="#f6e6e6" text-anchor="middle" dominant-baseline="central" filter="url(#nb7)">260</text>
<text transform="translate(192 79) rotate(-30) scale(0.85 1)" font-family="Liberation Sans" font-size="14" font-weight="bold" fill="#d89098" text-anchor="middle" dominant-baseline="central" filter="url(#bl1)">km/h</text>
<!-- hub -->
<circle cx="242" cy="160" r="36" fill="#060606" filter="url(#bl3)"/>
<path d="M220 146 Q213 165 226 182" stroke="#1e1e1e" stroke-width="4" fill="none" filter="url(#bl2)"/>
<circle cx="264" cy="224" r="18" fill="#050505" filter="url(#bl2)"/>
<path d="M255 210 Q248 225 258 240" stroke="#2e2e2e" stroke-width="4" fill="none" filter="url(#bl2)"/>
<!-- fuel gauge bits -->
<text transform="translate(290 290) rotate(-32) scale(0.85 1)" font-family="Liberation Sans" font-size="15" font-weight="bold" fill="#e8dada" text-anchor="middle" filter="url(#bl1)">Diesel</text>
<text transform="translate(300 308) rotate(-32) scale(0.85 1)" font-family="Liberation Sans" font-size="15" font-weight="bold" fill="#e8dada" text-anchor="middle" filter="url(#bl1)">1/2</text>
<rect x="271" y="256" width="10" height="15" transform="rotate(-25 276 263)" fill="#eadede" filter="url(#bl1)"/>
<rect x="273" y="258" width="6" height="4" transform="rotate(-25 276 263)" fill="#333" filter="url(#bl1)"/>
<text transform="translate(332 244) rotate(-25) scale(0.8 1)" font-family="Liberation Sans" font-size="17" font-weight="bold" fill="#f2e6e6" text-anchor="middle" dominant-baseline="central" filter="url(#bl1)">1</text>
<!-- needles -->
<line x1="224" y1="190" x2="186" y2="302" stroke="#c85040" stroke-width="3.5" filter="url(#bl1)"/>
<line x1="265" y1="133" x2="195" y2="302" stroke="#f3c8cc" stroke-width="5.5" filter="url(#bl1)"/>
<line x1="282" y1="237" x2="314" y2="302" stroke="#f0b8bc" stroke-width="5" filter="url(#bl1)"/>
<line x1="279" y1="262" x2="306" y2="302" stroke="#c05858" stroke-width="2" filter="url(#bl1)"/>
</g>
</svg>
<div class="abs" style="left:880px;top:156px;width:704px;font-size:14px;line-height:20px;color:#333;text-align:justify">
<b>Po zadání VIN se zobrazí informace o stavech počítadla ujeté vzdálenosti vozidla (tachometru).</b><br>Upozornění: Aplikace zobrazuje hodnoty zjištěné na počítadle ujeté vzdálenosti vozidla při technických prohlídkách vozidla na stanicích technické kontroly a stanicích měření emisí a nemusí odrážet skutečný (aktuální) celkový stav ujetých kilometrů vozidla.</div>
<div class="abs" style="left:880px;top:236px;width:704px;height:34px;border:1px solid #ddd;background:#fff"></div>
<div class="abs" style="left:940px;top:236px;width:1px;height:34px;background:#ddd"></div>
<div class="abs" style="left:1496px;top:236px;width:1px;height:34px;background:#ddd"></div>
<div class="abs" style="left:893px;top:245px;font-size:14px;color:#444">17/17</div>
<div class="abs" style="left:953px;top:245px;font-size:14px;color:#555">WBA3Y31080D348947</div>
<div class="abs" style="left:1509px;top:245px;font-size:14px;color:#444"><span style="font-weight:bold;font-size:13px">&#10006;</span> Smazat</div>
<svg class="abs" style="left:880px;top:285px" width="200" height="82" viewBox="0 0 200 82">
<defs>
<linearGradient id="cg0" x1="0" y1="0" x2="1" y2="1"><stop offset="0" stop-color="#f3d2f1"/><stop offset=".35" stop-color="#f9eefa"/><stop offset=".7" stop-color="#f7ecf8"/><stop offset="1" stop-color="#efd6f0"/></linearGradient>
<filter id="cbl" color-interpolation-filters="sRGB"><feGaussianBlur stdDeviation="3"/></filter>
<filter id="cbl1" color-interpolation-filters="sRGB"><feGaussianBlur stdDeviation="0.5"/></filter>
</defs>
<rect width="200" height="82" fill="url(#cg0)"/>
<g filter="url(#cbl)">
<path d="M0 10 Q40 0 80 8" stroke="#efbdee" stroke-width="9" fill="none"/>
<path d="M0 40 Q60 30 110 12 Q150 0 200 5" stroke="#fdf8fd" stroke-width="10" fill="none"/>
<path d="M0 75 Q80 80 140 62 Q180 50 200 40" stroke="#f4dff4" stroke-width="9" fill="none"/>
<path d="M120 82 Q160 70 200 60" stroke="#fbf4fb" stroke-width="8" fill="none"/>
<path d="M150 0 Q180 30 200 20" stroke="#f2dcf3" stroke-width="8" fill="none"/>
</g>
<g fill="#bba3d9" filter="url(#cbl1)" font-family="Liberation Serif" font-style="italic">
<text x="0" y="0" font-size="56" transform="translate(46 61) scale(0.85 1)">k</text>
<text x="0" y="0" font-size="44" transform="translate(65 56) scale(0.9 1)">x</text>
<text x="0" y="0" font-size="54" transform="translate(89 61) rotate(-6) scale(0.85 1)">3</text>
<text x="0" y="0" font-size="48" transform="translate(105 50) rotate(-8) scale(0.9 1)">y</text>
<text x="0" y="0" font-size="48" transform="translate(126 48) rotate(-8) scale(0.9 1)">y</text>
</g>
<rect x="0.5" y="0.5" width="199" height="81" fill="none" stroke="#aaa2b4"/>
</svg>
<div class="abs" style="left:1096px;top:287px;font-size:14px;font-weight:bold;color:#333">Opište kód z obrázku</div>
<div class="abs" style="left:1096px;top:312px;width:100px;height:34px;border:1px solid #ccc;background:#fff"></div>
<svg class="abs" style="left:882px;top:370px" width="24" height="24" viewBox="0 0 24 24">
<defs><radialGradient id="rfg" cx=".5" cy=".35" r=".65"><stop offset="0" stop-color="#ffffff"/><stop offset=".7" stop-color="#e6e6e6"/><stop offset="1" stop-color="#c8c8c8"/></radialGradient></defs>
<circle cx="12" cy="12" r="11" fill="url(#rfg)" stroke="#a9a9a9" stroke-width="1"/>
<path d="M6.3 10.5A6 6 0 0 1 16.5 8" stroke="#7a7a7a" stroke-width="2.2" fill="none"/>
<path d="M14 5.5L18.5 5.8 17.8 10.2Z" fill="#7a7a7a"/>
<path d="M17.7 13.5A6 6 0 0 1 7.5 16" stroke="#7a7a7a" stroke-width="2.2" fill="none"/>
<path d="M10 18.5L5.5 18.2 6.2 13.8Z" fill="#7a7a7a"/>
</svg>
<div class="abs" style="left:911px;top:374px;font-size:14px;color:#2b4a6b">Zobrazit jiný obrázek</div>
<div class="abs" style="left:880px;top:400px;width:103px;height:39px;border:2px solid #ddd;border-radius:4px;background:#fff;font-size:14px;font-weight:bold;color:#0d5a85;text-align:center;line-height:35px">Hledat</div>

<!-- results panel -->
<div class="abs" style="left:175px;top:521px;width:1570px;height:361px;background:#fff;border-top:3px solid #3d80a6;border-radius:3px 3px 0 0;box-shadow:0 1px 1px rgba(0,0,0,.05)"></div>
<div class="abs" style="left:185px;top:533px;font-size:18px;color:#333;white-space:nowrap">Seznam prohlídek - VIN WBA3Y31080D348947</div>
<div class="abs" style="left:175px;top:564px;width:1570px;height:1px;background:#f4f4f4"></div>
<div class="abs" style="left:186px;top:614px;width:1548px;height:58px;background:#f9f9f9"></div>
<div class="abs" style="left:186px;top:672px;width:1548px;height:57px;background:#fff"></div>
<div class="abs" style="left:186px;top:729px;width:1548px;height:57px;background:#f9f9f9"></div>
<div class="abs" style="left:186px;top:786px;width:1548px;height:57px;background:#fff"></div>
<div class="abs" style="left:186px;top:576px;width:1549px;height:1px;background:#f2f2f2"></div>
<div class="abs" style="left:186px;top:614px;width:1549px;height:2px;background:#f2f2f2"></div>
<div class="abs" style="left:186px;top:672px;width:1549px;height:1px;background:#f2f2f2"></div>
<div class="abs" style="left:186px;top:729px;width:1549px;height:1px;background:#f2f2f2"></div>
<div class="abs" style="left:186px;top:786px;width:1549px;height:1px;background:#f2f2f2"></div>
<div class="abs" style="left:186px;top:843px;width:1549px;height:1px;background:#f2f2f2"></div>
<div class="abs" style="left:186px;top:576px;width:1px;height:267px;background:#f2f2f2"></div>
<div class="abs" style="left:448px;top:576px;width:1px;height:267px;background:#f2f2f2"></div>
<div class="abs" style="left:617px;top:576px;width:1px;height:267px;background:#f2f2f2"></div>
<div class="abs" style="left:978px;top:576px;width:1px;height:267px;background:#f2f2f2"></div>
<div class="abs" style="left:1217px;top:576px;width:1px;height:267px;background:#f2f2f2"></div>
<div class="abs" style="left:1366px;top:576px;width:1px;height:267px;background:#f2f2f2"></div>
<div class="abs" style="left:1550px;top:576px;width:1px;height:267px;background:#f2f2f2"></div>
<div class="abs" style="left:1734px;top:576px;width:1px;height:267px;background:#f2f2f2"></div>
<div class="abs" style="left:194px;top:587px;font-size:14px;color:#333;white-space:nowrap">Datum prohlídky</div>
<div class="abs" style="left:457px;top:587px;font-size:14px;color:#333;white-space:nowrap">Prohlídka</div>
<div class="abs" style="left:626px;top:587px;font-size:14px;color:#333;white-space:nowrap">Číslo protokolu</div>
<div class="abs" style="left:987px;top:587px;font-size:14px;color:#333;white-space:nowrap">Druh prohlídky</div>
<div class="abs" style="left:1226px;top:587px;font-size:14px;color:#333;white-space:nowrap">Stav km</div>
<div class="abs" style="left:1375px;top:587px;font-size:14px;color:#333;white-space:nowrap">Poznámka</div>
<div class="abs" style="left:194px;top:636px;font-size:14px;color:#333;white-space:nowrap">25.04.2023</div>
<div class="abs" style="left:457px;top:636px;font-size:14px;color:#333;white-space:nowrap">STK</div>
<div class="abs" style="left:626px;top:636px;font-size:14px;color:#333;white-space:nowrap">CZ-3702-23-04-1129</div>
<div class="abs" style="left:987px;top:636px;font-size:14px;color:#333;white-space:nowrap">Pravidelná</div>
<div class="abs" style="left:1217px;width:141px;top:636px;font-size:14px;color:#333;text-align:right;white-space:nowrap">259 496</div>
<div class="abs" style="left:1559px;top:624px;width:165px;height:39px;border:2px solid #ddd;border-radius:4px;background:#fff;font-size:14px;font-weight:bold;color:#0d5a85;text-align:center;line-height:37px">Detail prohlídky</div>
<div class="abs" style="left:194px;top:693px;font-size:14px;color:#333;white-space:nowrap">25.04.2023</div>
<div class="abs" style="left:457px;top:693px;font-size:14px;color:#333;white-space:nowrap">SME</div>
<div class="abs" style="left:626px;top:693px;font-size:14px;color:#333;white-space:nowrap">CZ-470906-23-04-0381</div>
<div class="abs" style="left:987px;top:693px;font-size:14px;color:#333;white-space:nowrap">Pravidelná</div>
<div class="abs" style="left:1217px;width:141px;top:693px;font-size:14px;color:#333;text-align:right;white-space:nowrap">259 496</div>
<div class="abs" style="left:1559px;top:681px;width:165px;height:39px;border:2px solid #ddd;border-radius:4px;background:#fff;font-size:14px;font-weight:bold;color:#0d5a85;text-align:center;line-height:37px">Detail prohlídky</div>
<div class="abs" style="left:194px;top:750px;font-size:14px;color:#333;white-space:nowrap">22.04.2021</div>
<div class="abs" style="left:457px;top:750px;font-size:14px;color:#333;white-space:nowrap">STK</div>
<div class="abs" style="left:626px;top:750px;font-size:14px;color:#333;white-space:nowrap">CZ-3702-21-04-1063</div>
<div class="abs" style="left:987px;top:750px;font-size:14px;color:#333;white-space:nowrap">Pred registrací</div>
<div class="abs" style="left:1217px;width:141px;top:750px;font-size:14px;color:#333;text-align:right;white-space:nowrap">226 629</div>
<div class="abs" style="left:1559px;top:738px;width:165px;height:39px;border:2px solid #ddd;border-radius:4px;background:#fff;font-size:14px;font-weight:bold;color:#0d5a85;text-align:center;line-height:37px">Detail prohlídky</div>
<div class="abs" style="left:194px;top:807px;font-size:14px;color:#333;white-space:nowrap">22.04.2021</div>
<div class="abs" style="left:457px;top:807px;font-size:14px;color:#333;white-space:nowrap">SME</div>
<div class="abs" style="left:626px;top:807px;font-size:14px;color:#333;white-space:nowrap">CZ-470906-21-04-0276</div>
<div class="abs" style="left:987px;top:807px;font-size:14px;color:#333;white-space:nowrap">Pravidelná</div>
<div class="abs" style="left:1217px;width:141px;top:807px;font-size:14px;color:#333;text-align:right;white-space:nowrap">226 629</div>
<div class="abs" style="left:1559px;top:795px;width:165px;height:39px;border:2px solid #ddd;border-radius:4px;background:#fff;font-size:14px;font-weight:bold;color:#0d5a85;text-align:center;line-height:37px">Detail prohlídky</div>
<div class="abs" style="left:185px;top:854px;font-size:14px;color:#333;white-space:nowrap">Zobrazuji 1 až 4 z celkem 4 záznamů</div>
<div id="footer" class="abs"></div>

<!-- FOOTER -->
<div class="abs" style="left:0;top:969px;width:1920px;height:3px;background:#e6eef8"></div>
<svg class="abs" style="left:40px;top:984px" width="50" height="36" viewBox="40 984 50 36"><path d="M45 987H64L74 997H55Z" fill="#fff"/><path d="M45 1007H64L74 998L85 1007L74 1017H55Z" fill="#fff"/></svg>
<div class="abs" style="left:84px;top:989px;font-size:8px;font-weight:bold;color:#e0ecf7;white-space:nowrap;letter-spacing:0px">Ministerstvo dopravy</div>
<div class="abs" style="left:1696px;top:989px;font-size:14px;color:#fff;white-space:nowrap">Prostředí: PROD | Verze: 3.8</div>
<div id="taskbar" class="abs"></div>
<!-- TASKBAR -->
<div class="abs" style="left:0;top:1031px;width:1920px;height:1px;background:#0c4d6c"></div><div class="abs" style="left:0;top:1032px;width:1920px;height:2px;background:#b8f0f6"></div>
<svg class="abs" style="left:17px;top:1042px" width="28" height="26" viewBox="0 0 28 26"><defs><radialGradient id="sun" cx="0.4" cy="0.35" r="0.7"><stop offset="0" stop-color="#ffc04a"/><stop offset="1" stop-color="#ee8a12"/></radialGradient><linearGradient id="cl" x1="0" y1="0" x2="0" y2="1"><stop offset="0" stop-color="#dfe9f8"/><stop offset="1" stop-color="#aab6dc"/></linearGradient></defs><circle cx="20" cy="8.5" r="5.2" fill="url(#sun)"/><path d="M5 22.5C1.5 22.5 1.3 17.5 5 17 5.5 12.5 10.5 10.5 14 13.5 17 11.5 21.5 13 21.5 17.2 25 17.4 25 22.5 21.5 22.5Z" fill="url(#cl)" stroke="#a8b6d6" stroke-width="0.7"/></svg>
<div class="abs" style="left:50px;top:1041px;font-size:12px;color:#1a1a1a;white-space:nowrap">7°C</div>
<div class="abs" style="left:50px;top:1057px;font-size:12px;color:#2e4848;white-space:nowrap;letter-spacing:-0.1px">Převáž. oblačno</div>

<svg class="abs" style="left:551px;top:1045px" width="23" height="23" viewBox="0 0 23 23"><defs><linearGradient id="wg" x1="0" y1="0" x2="1" y2="1"><stop offset="0" stop-color="#28b4f2"/><stop offset="1" stop-color="#0a68d0"/></linearGradient></defs><rect x="0" y="0" width="11" height="11" fill="url(#wg)"/><rect x="12" y="0" width="11" height="11" fill="url(#wg)"/><rect x="0" y="12" width="11" height="11" fill="url(#wg)"/><rect x="12" y="12" width="11" height="11" fill="url(#wg)"/></svg>
<div class="abs" style="left:588px;top:1041px;width:217px;height:31px;border-radius:16px;background:linear-gradient(90deg,#eefbfb,#e6f8f8);border:1px solid #c9e6e8"></div>
<svg class="abs" style="left:597px;top:1047px" width="18" height="18" viewBox="0 0 18 18"><circle cx="7.5" cy="7.5" r="5.5" fill="none" stroke="#1b1b1b" stroke-width="1.7"/><path d="M11.5 11.5L16 16" stroke="#1b1b1b" stroke-width="1.9"/></svg>
<div class="abs" style="left:624px;top:1048px;font-size:14px;color:#555;white-space:nowrap">Hledat</div>

<svg class="abs" style="left:819px;top:1045px" width="25" height="23" viewBox="0 0 25 23"><rect x="7" y="1" width="17" height="15" fill="#f4f4f4" stroke="#ddd" stroke-width="0.6"/><rect x="0.5" y="7" width="17" height="15" fill="#1e1e1e"/><rect x="5" y="5" width="12" height="13" fill="#c8c8c8"/></svg>
<svg class="abs" style="left:863px;top:1044px" width="24" height="23" viewBox="0 0 24 23"><rect width="24" height="23" fill="#e41b23"/><path d="M3 14C3 11 5 10 8 9.5 10 7 14 6.5 17 8L21 10.5C22 11 22 13.5 21 14Z" fill="#fff"/><circle cx="7" cy="14.5" r="2" fill="#e41b23"/><circle cx="17" cy="14.5" r="2" fill="#e41b23"/></svg>
<svg class="abs" style="left:906px;top:1044px" width="25" height="23" viewBox="0 0 25 23"><circle cx="14" cy="4.5" r="3.5" fill="#7b83eb"/><circle cx="21" cy="6" r="2.6" fill="#5059c9"/><path d="M17 9H24V16A3.5 3.5 0 0 1 17 16Z" fill="#5059c9"/><path d="M8 9H19V17A5.5 5.5 0 0 1 8 17Z" fill="#7b83eb"/><rect x="1" y="6" width="12" height="12" rx="1.5" fill="#4b53bc"/><path d="M4 9H10M7 9V15.5" stroke="#fff" stroke-width="1.6"/></svg>
<svg class="abs" style="left:951px;top:1044px" width="23" height="24" viewBox="0 0 23 24"><path d="M7 5V3.5A2 2 0 0 1 9 1.5H14A2 2 0 0 1 16 3.5V5" fill="none" stroke="#2aa0d8" stroke-width="1.6"/><rect x="1" y="5" width="21" height="18" rx="2.5" fill="#0d5aa8"/><rect x="7" y="10" width="4" height="4" fill="#f25022"/><rect x="12" y="10" width="4" height="4" fill="#7fba00"/><rect x="7" y="15" width="4" height="4" fill="#00a4ef"/><rect x="12" y="15" width="4" height="4" fill="#ffb900"/></svg>
<svg class="abs" style="left:994px;top:1044px" width="26" height="23" viewBox="0 0 26 23"><path d="M1 3A1.5 1.5 0 0 1 2.5 1.5H9L11 3.5H23.5A1.5 1.5 0 0 1 25 5V21H1Z" fill="#e8a82a"/><path d="M1 7H25V21.5H1Z" fill="#fcd55c"/><path d="M6 21.5V17A1.5 1.5 0 0 1 7.5 15.5H18.5A1.5 1.5 0 0 1 20 17V21.5Z" fill="#1a88d8"/></svg>
<div class="abs" style="left:1004px;top:1072px;width:6px;height:3px;border-radius:2px;background:#6f8b93"></div>
<svg class="abs" style="left:1039px;top:1043px" width="25" height="25" viewBox="0 0 25 25"><defs><linearGradient id="eg1" x1="0" y1="0" x2="1" y2="1"><stop offset="0" stop-color="#2fb7e8"/><stop offset="1" stop-color="#0a5cb0"/></linearGradient><linearGradient id="eg2" x1="0" y1="0" x2="1" y2="0"><stop offset="0" stop-color="#3ccf8e"/><stop offset="1" stop-color="#7ad94a"/></linearGradient></defs>
<path d="M12.5 1A11.5 11.5 0 1 0 22.5 18.5C20 20 16 20.5 13.5 19 10.5 17.5 9.5 14.5 11 12.5 12 11 14.5 10.8 16 12 17 13 17 14.5 16.5 15.5 20 15.5 23.5 13.5 23.5 10.5 23 5 18 1 12.5 1Z" fill="url(#eg1)"/>
<path d="M12.5 1C18 1 23 5 23.5 10.5 23.5 13.5 20 15.5 16.5 15.5 17 14 16.5 12 14.5 11 17 8 20.5 8.5 22.5 9.5 21 4.5 17 1.5 12.5 1Z" fill="url(#eg2)"/>
</svg>
<div class="abs" style="left:1076px;top:1038px;width:38px;height:37px;border-radius:5px;background:#e5f6f8"></div>
<svg class="abs" style="left:1083px;top:1043px" width="24" height="24" viewBox="0 0 24 24"><circle cx="12" cy="12" r="11" fill="#db4437"/><path d="M12 12L21.5 6.5A11 11 0 0 1 12.5 23Z" fill="#fcc934"/><path d="M12 12L12.5 23A11 11 0 0 1 2.5 6.5Z" fill="#1ea362"/><path d="M12 12L2.5 6.5A11 11 0 0 1 21.5 6.5Z" fill="#e33b2e"/><circle cx="12" cy="12" r="5" fill="#fff"/><circle cx="12" cy="12" r="4" fill="#1a73e8"/></svg>
<div class="abs" style="left:1088px;top:1071px;width:14px;height:3px;border-radius:2px;background:#0b6cc4"></div>
<svg class="abs" style="left:1126px;top:1043px" width="24" height="25" viewBox="0 0 24 25"><path d="M4 4H20L22 11V17H2V11Z" fill="#7a1f3a"/><rect x="6" y="5" width="12" height="5" fill="#3b2a55"/><circle cx="9" cy="7.5" r="1.2" fill="#fff"/><circle cx="15" cy="7.5" r="1.2" fill="#fff"/><path d="M5 17V23H8M19 17V23H16" stroke="#111" stroke-width="2" fill="none"/></svg>
<svg class="abs" style="left:1171px;top:1044px" width="24" height="24" viewBox="0 0 24 24"><circle cx="12" cy="12" r="11.5" fill="#1b8ad6"/><path d="M3 14C7 11 12 12 14 15 17 12 20 12 22 13 19 15 16 16 14 18 12 15 7 14 3 14Z" fill="#fff"/><path d="M12 8C13 6.5 15 6 16 7 17 6.5 18.5 6.8 19 7.5 17.5 8 16.5 9 16 10 15 8.5 13 8 12 8Z" fill="#fff"/></svg>
<svg class="abs" style="left:1214px;top:1043px" width="25" height="25" viewBox="0 0 25 25"><defs><radialGradient id="fg1214" cx=".35" cy=".3" r=".8"><stop offset="0" stop-color="#ffffff"/><stop offset=".55" stop-color="#9cc4e4"/><stop offset="1" stop-color="#2a6aa8"/></radialGradient></defs><circle cx="12.5" cy="12.5" r="11.5" fill="url(#fg1214)" stroke="#c8d4e4" stroke-width="0.8"/><path d="M14 4.5A11 11 0 0 1 24 12.5 11 11 0 0 1 13 24Z" fill="#1c2a72"/><path d="M8 21L16.5 6M12 21L20.5 10.5" stroke="#fff" stroke-width="2.4"/><path d="M13 15H21" stroke="#fff" stroke-width="2"/></svg>

<svg class="abs" style="left:1258px;top:1043px" width="25" height="25" viewBox="0 0 25 25"><path d="M3 3H10L15 6 20 3 23 10 20 16H23V23H14V19A5 5 0 1 1 4 17V10Z" fill="#c8d4f4" stroke="#2b3da8" stroke-width="1.6"/><circle cx="9" cy="18" r="4" fill="#e4eafc" stroke="#2b3da8" stroke-width="1.4"/><path d="M10 3L14 12 20 3" stroke="#2b3da8" stroke-width="1.4" fill="none"/></svg>
<div class="abs" style="left:1267px;top:1072px;width:6px;height:3px;border-radius:2px;background:#6f8b93"></div>
<svg class="abs" style="left:1302px;top:1043px" width="25" height="25" viewBox="0 0 25 25"><defs><radialGradient id="fg1302" cx=".35" cy=".3" r=".8"><stop offset="0" stop-color="#ffffff"/><stop offset=".55" stop-color="#9cc4e4"/><stop offset="1" stop-color="#2a6aa8"/></radialGradient></defs><circle cx="12.5" cy="12.5" r="11.5" fill="url(#fg1302)" stroke="#c8d4e4" stroke-width="0.8"/><path d="M14 4.5A11 11 0 0 1 24 12.5 11 11 0 0 1 13 24Z" fill="#1c2a72"/><path d="M8 21L16.5 6M12 21L20.5 10.5" stroke="#fff" stroke-width="2.4"/><path d="M13 15H21" stroke="#fff" stroke-width="2"/></svg>
<div class="abs" style="left:1312px;top:1072px;width:6px;height:3px;border-radius:2px;background:#6f8b93"></div>
<svg class="abs" style="left:1345px;top:1038px" width="30" height="30" viewBox="0 0 30 30"><rect x="9" y="9" width="17" height="17" rx="2" fill="#28a8ea"/><path d="M9 16H26V26H9Z" fill="#0f78d4"/><rect x="2" y="11" width="13" height="13" rx="1.5" fill="#0a5fb4"/><text x="8.5" y="21.5" font-family="Liberation Sans" font-weight="bold" font-size="10" fill="#fff" text-anchor="middle">O</text><circle cx="22.5" cy="7.5" r="7" fill="#3aa6e8"/><path d="M19 5.3H26V10H19Z M19 5.3L22.5 8 26 5.3" fill="none" stroke="#0b2340" stroke-width="1.1"/></svg>
<div class="abs" style="left:1355px;top:1072px;width:6px;height:3px;border-radius:2px;background:#6f8b93"></div>

<svg class="abs" style="left:1700px;top:1050px" width="14" height="10" viewBox="0 0 14 10"><path d="M1.5 8L7 2.5 12.5 8" stroke="#222" stroke-width="1.4" fill="none"/></svg>
<svg class="abs" style="left:1729px;top:1047px" width="20" height="18" viewBox="0 0 20 18"><path d="M3.5 13C0.5 13 0.5 8 3.5 8 4 4 9.5 3 11.5 6.5 14 5.5 16.5 7.5 16 10H13Z" fill="#555"/><circle cx="13.5" cy="12" r="4.8" fill="#e23b3b"/><path d="M11.7 10.2L15.3 13.8M15.3 10.2L11.7 13.8" stroke="#fff" stroke-width="1.2"/></svg>
<svg class="abs" style="left:1762px;top:1047px" width="18" height="16" viewBox="0 0 18 16"><path d="M1 6A11 11 0 0 1 17 6M3.5 8.6A7.5 7.5 0 0 1 14.5 8.6M6 11.2A4 4 0 0 1 12 11.2" stroke="#222" stroke-width="1.3" fill="none"/><circle cx="9" cy="13.6" r="1.3" fill="#222"/></svg>
<svg class="abs" style="left:1786px;top:1047px" width="17" height="16" viewBox="0 0 17 16"><path d="M1.5 5.5H4.5L8.5 2V14L4.5 10.5H1.5Z" fill="none" stroke="#222" stroke-width="1.2" stroke-linejoin="round"/><path d="M11 5.5C12 6.5 12 9.5 11 10.5M13.3 3.8C15 5.5 15 10.5 13.3 12.2" stroke="#222" stroke-width="1.2" fill="none"/></svg>
<div class="abs" style="left:1810px;top:1042px;width:67px;font-size:11.5px;color:#1a1a1a;text-align:right;white-space:nowrap">10:58</div>
<div class="abs" style="left:1810px;top:1058px;width:67px;font-size:11.5px;color:#1a1a1a;text-align:right;white-space:nowrap">04.03.2025</div>
<svg class="abs" style="left:1884px;top:1046px" width="17" height="19" viewBox="0 0 17 19"><path d="M2 14V8.5A6 6 0 0 1 12 4.5V14L13.5 15.5H0.5Z" fill="#1e1e1e"/><path d="M5 17H9" stroke="#1e1e1e" stroke-width="1.6"/><path d="M4.5 7H8.5L4.5 11.5H8.5" stroke="#fff" stroke-width="1.1" fill="none"/><path d="M11.5 1H15L11.5 5H15" stroke="#1e1e1e" stroke-width="1.1" fill="none"/></svg>

</body></html>
